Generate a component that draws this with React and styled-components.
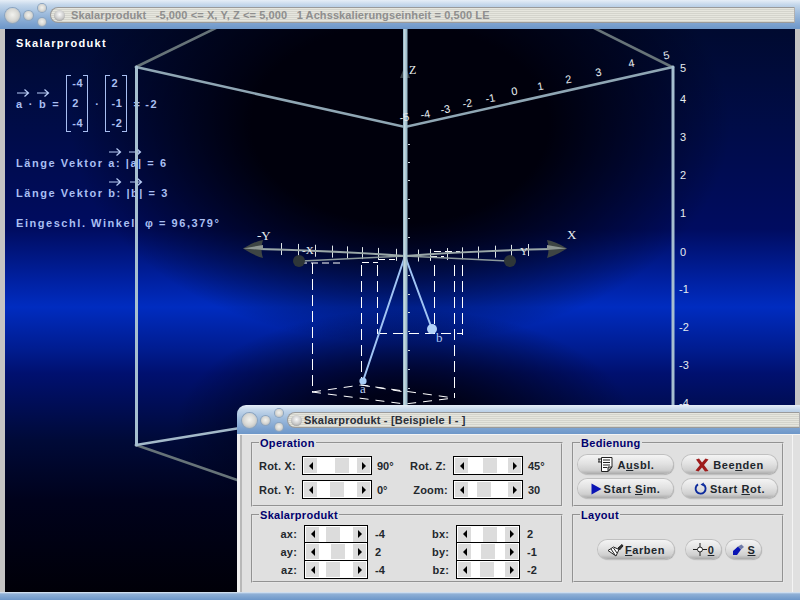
import React from "react";
import styled, { createGlobalStyle } from "styled-components";

const Global = createGlobalStyle`
  html, body { margin: 0; padding: 0; width: 800px; height: 600px; overflow: hidden; background: #000; }
  #root { width: 800px; height: 600px; }
  * { box-sizing: border-box; }
`;

const Desktop = styled.div`
  position: relative;
  width: 800px;
  height: 600px;
  display: flex;
  flex-direction: column;
  font-family: "Liberation Sans", Arial, sans-serif;
  overflow: hidden;
`;

const TitleBar = styled.div`
  flex: none;
  height: 29px;
  display: flex;
  align-items: flex-start;
  padding: 1px ${p => (p.$rounded ? "0" : "5px")} 0 4px;
  background: linear-gradient(#e6eef7 0, #c3d6ea 5px, #9dbbdc 14px, #7ba1cf 24px, #6d97c9 29px);
  border-radius: ${p => (p.$rounded ? "9px 0 0 0" : "0")};
`;

const Knobs = styled.div`
  flex: none;
  width: 44px;
  height: 28px;
  display: grid;
  grid-template-columns: 17px 15px 12px;
  grid-template-rows: 14px 14px;
  align-items: center;
  justify-items: center;
`;

const Knob = styled.span`
  display: block;
  width: ${p => p.$size}px;
  height: ${p => p.$size}px;
  border-radius: 50%;
  grid-row: ${p => p.$row};
  grid-column: ${p => p.$col};
  background: radial-gradient(circle at 50% 45%, #f2f2ee 0, #d8d8d4 50%, #a2a6aa 100%);
  box-shadow: 0 0 0 1px #8ba4bf;
`;

const Pill = styled.div`
  flex: 1;
  height: 16px;
  margin: 6px 0 0 2px;
  display: flex;
  align-items: center;
  gap: ${p => p.$gap}px;
  padding-left: 3px;
  border-radius: 9px 0 0 9px;
  border: 1px solid #9a9a9a;
  border-right-color: #b0b0b0;
  background: repeating-linear-gradient(#e6e6de 0, #e6e6de 1px, #d4d4cc 1px, #d4d4cc 2px);
  overflow: hidden;
`;

const PillKnob = styled.span`
  flex: none;
  width: 11px;
  height: 11px;
  border-radius: 50%;
  background: radial-gradient(circle at 50% 40%, #fafafa 0, #c8c8c8 55%, #7f7f7f 100%);
`;

const TitleText = styled.span`
  font-size: 11px;
  font-weight: 700;
  white-space: pre;
  letter-spacing: ${p => (p.$dim ? "0.1px" : "0.2px")};
  color: ${p => (p.$dim ? "#8e8e8e" : "#2a2f38")};
`;

const WindowBody = styled.div`
  flex: 1;
  display: flex;
  min-height: 0;
  border-left: 5px solid #c4c4c4;
  border-right: 5px solid #c4c4c4;
`;

const BottomBar = styled.div`
  flex: none;
  height: 8px;
  background: linear-gradient(#e4edf6 0, #8fb0d6 2px, #6d97c9 100%);
`;

const Canvas = styled.div`
  position: relative;
  flex: 1;
  overflow: hidden;
  background:
    radial-gradient(ellipse 330px 220px at 395px 95px, #00000c 45%, rgba(0,0,12,0) 100%),
    radial-gradient(ellipse 230px 120px at 400px 400px, rgba(0,0,16,0.9) 30%, rgba(0,0,16,0) 100%),
    linear-gradient(#000a30 0, #000c48 100px, #000c60 200px, #0020a0 250px, #002cc0 278px, #001c90 320px, #001070 344px, #000a38 411px, #00021c 471px, #000008 100%);
`;

const InfoPanel = styled.div`
  padding: 7px 0 0 11px;
  display: flex;
  flex-direction: column;
  color: #a9bff2;
  font-size: 11px;
  font-weight: 700;
  letter-spacing: 1.55px;
`;

const Heading = styled.div`
  color: #fff;
  line-height: 14px;
  letter-spacing: 1.3px;
  margin-bottom: 25px;
`;

const FormulaRow = styled.div`
  display: flex;
  align-items: center;
  height: 57px;
  white-space: pre;
`;

const Glyph = styled.span`
  margin-left: ${p => p.$ml}px;
`;

const Matrix = styled.div`
  position: relative;
  flex: none;
  width: 22px;
  height: 57px;
  margin-left: ${p => p.$ml}px;
  display: flex;
  flex-direction: column;
  justify-content: space-between;
  padding: 1px 0 1px 5px;
  line-height: 15px;
  letter-spacing: 0.6px;
  border-left: 1px solid #a9bff2;
  border-right: 1px solid #a9bff2;
  background:
    linear-gradient(#a9bff2, #a9bff2) left top / 4px 1px no-repeat,
    linear-gradient(#a9bff2, #a9bff2) right top / 4px 1px no-repeat,
    linear-gradient(#a9bff2, #a9bff2) left bottom / 4px 1px no-repeat,
    linear-gradient(#a9bff2, #a9bff2) right bottom / 4px 1px no-repeat;
`;

const InfoLine = styled.div`
  height: 14px;
  line-height: 14px;
  white-space: pre;
  margin-top: ${p => p.$top}px;
`;

const Vec = styled.span`
  position: relative;
  display: inline-block;
  & > svg {
    position: absolute;
    left: ${p => p.$left ?? 0}px;
    top: -${p => p.$lift ?? 9}px;
  }
`;

const Arrow = () => (
  <svg width="14" height="10" viewBox="0 0 14 10">
    <path d="M1 5H12.5M8.5 1.5L12.5 5L8.5 8.5" fill="none" stroke="#b8ccf5" strokeWidth="1.2" />
  </svg>
);

const SceneSvg = styled.svg`
  position: absolute;
  left: 0;
  top: 0;
  width: 790px;
  height: 563px;
`;

const ticksTop = [
  ["-5", 405, 121], ["-4", 426, 118], ["-3", 446, 113], ["-2", 468, 107], ["-1", 491, 102], ["0", 515, 95],
  ["1", 541, 90], ["2", 569, 83], ["3", 599, 76], ["4", 632, 67], ["5", 667, 59],
];
const ticksSide = [
  ["5", 680, 72], ["4", 680, 103], ["3", 680, 141], ["2", 680, 179], ["1", 680, 217], ["0", 680, 256],
  ["-1", 679, 293], ["-2", 679, 331], ["-3", 679, 369], ["-4", 679, 407],
];
const xyTicks = [281, 298, 315, 332, 347, 362, 378, 396, 418, 430, 447, 462, 478, 495, 511, 528];

const Cone = ({ tip, base }) => {
  const d = tip < base ? -1 : 1;
  return (
    <g>
      <path d={`M${tip} 248.5Q${base + d * 8} 241 ${base} 240Q${base + d * 3} 249 ${base} 258Q${base + d * 8} 256 ${tip} 248.5Z`} fill="#3e4544" />
      <path d={`M${tip} 248.5L${base} 245L${base} 250Z`} fill="#8e9692" />
    </g>
  );
};

const Scene = () => (
  <SceneSvg viewBox="5 29 790 563">
    <g fill="none" strokeLinecap="round">
      <path d="M136 67L218 27M672 67L592 27M136 445L240 481" stroke="#667378" strokeWidth="2.6" />
      <path d="M136 67L405 127L673 67" stroke="#8fa6b4" strokeWidth="2.6" />
      <path d="M136 445L240 428" stroke="#a3b9c9" strokeWidth="2.6" />
      <path d="M136.5 67V445M673 67V410" stroke="#a6bfd0" strokeWidth="3" />
    </g>
    <path d="M405 65L400 78H410Z" fill="#3a4246" />
    <g stroke="#fff" strokeWidth="1" fill="none">
      <path d="M312.5 263V392M361.5 265V383M377.5 265V333M434.5 265V330M454.5 265V398M462.5 265V335" strokeDasharray="11 5" />
      <path d="M377 333.5H462" strokeDasharray="10 6" />
      <path d="M312 392L361 385L454 398M312 392L405 404L454 398M361 385L405 392" strokeDasharray="9 7" />
      <path d="M300 263L340 263M362 262.5H378M378 259.5H395M430 256.5H444M434 251.5H460" strokeDasharray="7 4" />
    </g>
    <g stroke="#dfe6e6" strokeWidth="1">
      {xyTicks.map(x => (
        <path key={x} d={`M${x + 0.5} ${x < 405 ? 243 + (x - 280) * 0.05 : 244 + (528 - x) * 0.05}v12`} />
      ))}
    </g>
    <g fill="none">
      <path d="M302 261L405 256L508 261" stroke="#8c9a9c" strokeWidth="1.6" />
      <path d="M258 249Q340 251 405 256Q470 251 552 249" stroke="#9aa8a8" strokeWidth="2" />
    </g>
    <circle cx="299" cy="261" r="6" fill="#2e3638" />
    <circle cx="510" cy="261" r="6" fill="#2e3638" />
    <Cone tip={243} base={263} />
    <Cone tip={567} base={547} />
    <path d="M405 256L363 381M405 256L432 329" stroke="#a0c4f4" strokeWidth="2" />
    <rect x="403" y="27" width="4.5" height="380" fill="#9dbccb" />
    <rect x="404" y="27" width="1.5" height="380" fill="#c4d7df" />
    <g stroke="#cfd8dc" strokeWidth="1">
      {[144, 162, 180, 199, 218, 237, 275, 294, 312, 331, 350, 369, 388].map(y => (
        <path key={y} d={`M408 ${y + 0.5}h2`} />
      ))}
    </g>
    <circle cx="363" cy="381" r="3.6" fill="#a9cdf7" />
    <circle cx="432" cy="329" r="5" fill="#b2d2f8" />
    <g fontFamily="'Liberation Serif', serif" fontSize="13" fill="#e8eef0">
      <text x="409" y="74" fontSize="12">Z</text>
      <text x="257" y="240">-Y</text>
      <text x="567" y="239">X</text>
      <text x="302" y="254" fontSize="11">-X</text>
      <text x="520" y="255" fontSize="11">Y</text>
      <text x="360" y="393" fill="#b5cdf5" fontSize="13">a</text>
      <text x="436" y="342" fill="#b5cdf5" fontSize="13">b</text>
    </g>
    <g fontFamily="'Liberation Sans', sans-serif" fontSize="11" fill="#e6ecf0">
      {ticksTop.map(([t, x, y]) => (
        <text key={t} x={x} y={y} textAnchor="middle" transform={`rotate(-10 ${x} ${y})`}>{t}</text>
      ))}
      {ticksSide.map(([t, x, y]) => (
        <text key={t} x={x} y={y}>{t}</text>
      ))}
    </g>
  </SceneSvg>
);

const Dialog = styled.div`
  position: absolute;
  left: 237px;
  top: 405px;
  width: 563px;
  height: 195px;
  display: flex;
  flex-direction: column;
`;

const Client = styled.div`
  flex: none;
  height: 158px;
  display: grid;
  grid-template-columns: 312px 212px;
  grid-template-rows: 72px 76px;
  column-gap: 9px;
  padding: 0 0 0 14px;
  background: #e0e0e0;
  border-top: 1px solid #f4f4f4;
  box-shadow: inset 3px 0 0 #f0f0f0, inset 5px 0 0 #b8b8b8, inset -7px 0 0 #e0e0e0, inset -8px 0 0 #f4f4f4;
`;

const Group = styled.fieldset`
  margin: 0;
  min-width: 0;
  padding: 0;
  border: 2px groove #e6e6e6;
  height: ${p => p.$height}px;
`;

const Legend = styled.legend`
  margin-left: 6px;
  padding: 2px 1px 0;
  color: #00006e;
  font-size: 11px;
  line-height: 13px;
  font-weight: 700;
  letter-spacing: 0.3px;
`;

const OperationGrid = styled.div`
  display: grid;
  grid-template-columns: 43px 70px 38px 43px 70px 1fr;
  grid-auto-rows: 19px;
  row-gap: 5px;
  align-items: center;
  padding: 6px 0 0 6px;
`;

const AxisGrid = styled.div`
  display: grid;
  grid-template-columns: 51px 64px 64px 24px 64px 1fr;
  grid-auto-rows: 18px;
  align-items: center;
  padding: 3px 0 0 0;
`;

const Label = styled.span`
  font-size: 11px;
  font-weight: 700;
  color: #23282d;
  letter-spacing: 0.2px;
  white-space: pre;
  text-align: ${p => (p.$right ? "right" : "left")};
  padding-right: ${p => (p.$right ? "7px" : "0")};
`;

const Value = styled.span`
  font-size: 11px;
  font-weight: 700;
  color: #23282d;
  padding-left: ${p => p.$pad ?? 5}px;
`;

const SliderBox = styled.div`
  height: ${p => p.$h}px;
  display: flex;
  align-items: stretch;
  position: relative;
  background: #fff;
  border: 1px solid #000;
  margin-top: ${p => (p.$joined ? "-1px" : "0")};
  padding: 1px;
`;

const ArrowButton = styled.button`
  flex: none;
  width: 13px;
  padding: 0;
  border: none;
  background: #dcdcdc;
  display: flex;
  align-items: center;
  justify-content: center;
  &::before {
    content: "";
    width: 0;
    height: 0;
    border-top: 4px solid transparent;
    border-bottom: 4px solid transparent;
    ${p => (p.$right ? "border-left: 4px solid #000;" : "border-right: 4px solid #000;")}
  }
`;

const Track = styled.div`
  flex: 1;
  display: flex;
`;

const Thumb = styled.div`
  width: 14px;
  background: #dcdcdc;
  margin-left: ${p => p.$at}px;
`;

const Slider = ({ at, h = 19, joined }) => (
  <SliderBox $h={h} $joined={joined}>
    <ArrowButton aria-label="links" />
    <Track><Thumb $at={at - 15} /></Track>
    <ArrowButton $right aria-label="rechts" />
  </SliderBox>
);

const ButtonGrid = styled.div`
  display: grid;
  grid-template-columns: 95px 95px;
  column-gap: 9px;
  grid-auto-rows: 19px;
  row-gap: 5px;
  padding: 5px 0 0 4px;
`;

const LayoutRow = styled.div`
  display: flex;
  padding: 18px 0 0 24px;
`;

const PillButton = styled.button`
  width: ${p => (p.$w ? p.$w + "px" : "auto")};
  height: 19px;
  margin-right: ${p => p.$mr ?? 0}px;
  padding: 0;
  display: flex;
  align-items: center;
  justify-content: center;
  gap: ${p => p.$gap ?? 2}px;
  border: none;
  border-radius: 10px;
  background: linear-gradient(#f4f4f4 0, #e2e2e2 45%, #cfcfcf 80%, #a9a9a9 100%);
  box-shadow: 0 0 0 1px #c0c0c0, 1px 1px 1px #9a9a9a;
  font-family: inherit;
  font-size: 11px;
  font-weight: 700;
  letter-spacing: 0.55px;
  color: #20262c;
  white-space: pre;
  & > svg { flex: none; }
`;

const IconDoc = () => (
  <svg width="19" height="17" viewBox="0 0 19 17" fill="none" stroke="#222" strokeWidth="1">
    <path d="M1 3h3M1 6h3M2 3v3" />
    <path d="M4.5 1.5H15V11L11 15.5H4.5Z" fill="#fff" />
    <path d="M6 4h7M6 6.5h7M6 9h7M6 11.5h4" />
    <path d="M11 15.5L15 11H11Z" fill="#bbb" />
  </svg>
);
const IconX = () => (
  <svg width="14" height="14" viewBox="0 0 14 14">
    <path d="M1 1.5L4 .5L7 4.5L10.5 .5L13.5 1.5L9 7L13.5 13L10 13.5L7 9.5L3.5 13.5L.5 12.5L5 7Z" fill="#9e1a1a" />
  </svg>
);
const IconPlay = () => (
  <svg width="11" height="12" viewBox="0 0 11 12"><path d="M.5 .5L10.5 6L.5 11.5Z" fill="#0a14b4" /></svg>
);
const IconRotate = () => (
  <svg width="13" height="13" viewBox="0 0 13 13" fill="none">
    <path d="M4 2.4A5 5 0 1 0 9.5 2.6" stroke="#0c2a9c" strokeWidth="1.9" />
    <path d="M9.8 .4V4.4L6.5 2.6Z" fill="#0c2a9c" />
  </svg>
);
const IconBrush = () => (
  <svg width="17" height="14" viewBox="0 0 17 14" fill="none" stroke="#222" strokeWidth="1">
    <path d="M11 5L15 1.5L16 3L12.5 7Z" fill="#333" />
    <path d="M1 7.5L6.5 4L12 6.5L9 13Z" fill="#fff" />
    <path d="M4 6L8 12M6.5 5L10 10" />
  </svg>
);
const IconCross = () => (
  <svg width="14" height="13" viewBox="0 0 14 13" fill="none" stroke="#222" strokeWidth="1">
    <circle cx="7" cy="6.5" r="2.5" fill="#fff" />
    <path d="M0 6.5H4.5M9.5 6.5H14M7 0V4M7 9V13" />
  </svg>
);
const IconEraser = () => (
  <svg width="13" height="12" viewBox="0 0 13 12">
    <path d="M1 7L6 2.5L9 5.5L5 11H1Z" fill="#0a14b4" />
    <path d="M6 2.5L9.5 .5L12 3L9 5.5Z" fill="#6e7aa8" />
  </svg>
);

const operationRows = [
  ["Rot. X:", 33, "90°", "Rot. Z:", 30, "45°"],
  ["Rot. Y:", 28, "0°", " Zoom:", 24, "30"],
];
const axisRows = [
  ["ax:", 22, "-4", "bx:", 27, "2"],
  ["ay:", 27, "2", "by:", 25, "-1"],
  ["az:", 22, "-4", "bz:", 24, "-2"],
];

const WindowKnobs = () => (
  <Knobs>
    <Knob $size={15} $row="1 / 3" $col="1" />
    <Knob $size={9} $row="1 / 3" $col="2" />
    <Knob $size={8} $row="1" $col="3" />
    <Knob $size={8} $row="2" $col="3" />
  </Knobs>
);

const ControlDialog = () => (
  <Dialog>
    <TitleBar $rounded>
      <WindowKnobs />
      <Pill $gap={2}>
        <PillKnob />
        <TitleText>Skalarprodukt - [Beispiele I - ]</TitleText>
      </Pill>
    </TitleBar>
    <Client>
      <Group $height={72}>
        <Legend>Operation</Legend>
        <OperationGrid>
          {operationRows.map(r => (
            <React.Fragment key={r[0]}>
              <Label>{r[0]}</Label>
              <Slider at={r[1]} />
              <Value>{r[2]}</Value>
              <Label>{r[3]}</Label>
              <Slider at={r[4]} />
              <Value>{r[5]}</Value>
            </React.Fragment>
          ))}
        </OperationGrid>
      </Group>
      <Group $height={72}>
        <Legend>Bedienung</Legend>
        <ButtonGrid>
          <PillButton><IconDoc /><span>A<u>u</u>sbl.</span></PillButton>
          <PillButton $gap={4}><IconX /><span>Bee<u>n</u>den</span></PillButton>
          <PillButton><IconPlay /><span>Start <u>S</u>im.</span></PillButton>
          <PillButton $gap={3}><IconRotate /><span>Start <u>R</u>ot.</span></PillButton>
        </ButtonGrid>
      </Group>
      <Group $height={76}>
        <Legend>Skalarprodukt</Legend>
        <AxisGrid>
          {axisRows.map((r, i) => (
            <React.Fragment key={r[0]}>
              <Label $right>{r[0]}</Label>
              <Slider at={r[1]} h={19} joined={i > 0} />
              <Value $pad={7}>{r[2]}</Value>
              <Label $right>{r[3]}</Label>
              <Slider at={r[4]} h={19} joined={i > 0} />
              <Value $pad={7}>{r[5]}</Value>
            </React.Fragment>
          ))}
        </AxisGrid>
      </Group>
      <Group $height={76}>
        <Legend>Layout</Legend>
        <LayoutRow>
          <PillButton $w={76} $mr={12} $gap={1}><IconBrush /><span><u>F</u>arben</span></PillButton>
          <PillButton $w={35} $mr={5} $gap={1}><IconCross /><u>0</u></PillButton>
          <PillButton $w={35} $gap={3}><IconEraser /><u>S</u></PillButton>
        </LayoutRow>
      </Group>
    </Client>
    <BottomBar />
  </Dialog>
);

export default function App() {
  return (
    <Desktop>
      <Global />
      <TitleBar>
        <WindowKnobs />
        <Pill $gap={6}>
          <PillKnob />
          <TitleText $dim>{"Skalarprodukt   -5,000 <= X, Y, Z <= 5,000   1 Achsskalierungseinheit = 0,500 LE"}</TitleText>
        </Pill>
      </TitleBar>
      <WindowBody>
        <Canvas>
          <InfoPanel>
            <Heading>Skalarprodukt</Heading>
            <FormulaRow>
              <Vec $lift={10}><Arrow />a</Vec>
              <Glyph $ml={5}>·</Glyph>
              <Glyph $ml={5}><Vec $left={-3} $lift={10}><Arrow />b</Vec></Glyph>
              <Glyph $ml={5}>=</Glyph>
              <Matrix $ml={6}><span>-4</span><span>2</span><span>-4</span></Matrix>
              <Glyph $ml={7}>·</Glyph>
              <Matrix $ml={5}><span>2</span><span>-1</span><span>-2</span></Matrix>
              <Glyph $ml={6}>=</Glyph>
              <Glyph $ml={4}>-2</Glyph>
            </FormulaRow>
            <InfoLine $top={24}>Länge Vektor <Vec><Arrow />a</Vec>: |<Vec $left={-2}><Arrow />a</Vec>| = 6</InfoLine>
            <InfoLine $top={16}>Länge Vektor <Vec><Arrow />b</Vec>: |<Vec $left={-2}><Arrow />b</Vec>| = 3</InfoLine>
            <InfoLine $top={16}>Eingeschl. Winkel  φ = 96,379°</InfoLine>
          </InfoPanel>
          <Scene />
        </Canvas>
      </WindowBody>
      <BottomBar />
      <ControlDialog />
    </Desktop>
  );
}
